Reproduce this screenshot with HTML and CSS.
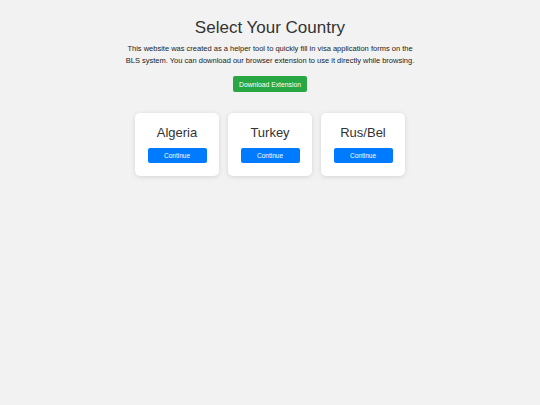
FILE: index.html
```html
<!DOCTYPE html>
<html lang="en">
<head>
    <meta charset="UTF-8">
    <title>Select Your Country</title>
    <link rel="stylesheet" href="styles.css">
</head>
<body>

<div class="intro">
    <h1>Select Your Country</h1>
    <p>This website was created as a helper tool to quickly fill in visa application forms on the BLS system. You can download our browser extension to use it directly while browsing.</p>
    <button class="download-btn">Download Extension</button>
</div>

<div class="countries">
    <div class="country-card">
        <h2>Algeria</h2>
        <button class="continue-btn">Continue</button>
    </div>
    <div class="country-card">
        <h2>Turkey</h2>
        <button class="continue-btn">Continue</button>
    </div>
    <div class="country-card">
        <h2>Rus/Bel</h2>
        <button class="continue-btn">Continue</button>
    </div>
</div>

</body>
</html>
```

FILE: styles.css
```css
body {
    font-family: "Liberation Sans", Arial, sans-serif;
    background: #f2f2f2;
    color: #333;
    margin: 0;
    padding: 18px 0;
    text-align: center;
}
.intro h1 {
    font-size: 17px;
    font-weight: normal;
    margin: 0 0 5px;
    line-height: 20px;
}
.intro p {
    font-size: 7.5px;
    line-height: 12px;
    width: 290px;
    margin: 0 auto 9px;
    color: #222;
}
button {
    border: none;
    border-radius: 2px;
    color: white;
    font-family: inherit;
    cursor: pointer;
    display: block;
    margin: 0 auto;
}
.download-btn {
    background-color: #28a745;
    font-size: 6.8px;
    height: 16px;
    padding: 0 6px;
}
.countries {
    display: flex;
    justify-content: center;
    gap: 9px;
    margin-top: 21px;
}
.country-card {
    background: white;
    width: 84px;
    height: 63px;
    border-radius: 5px;
    box-shadow: 0 1px 5px rgba(0,0,0,0.12);
    box-sizing: border-box;
    padding-top: 12px;
}
.country-card h2 {
    font-size: 13px;
    font-weight: normal;
    margin: 0 0 8px;
    line-height: 15px;
}
.continue-btn {
    background-color: #007bff;
    font-size: 6.5px;
    width: 59px;
    height: 15px;
}
```
